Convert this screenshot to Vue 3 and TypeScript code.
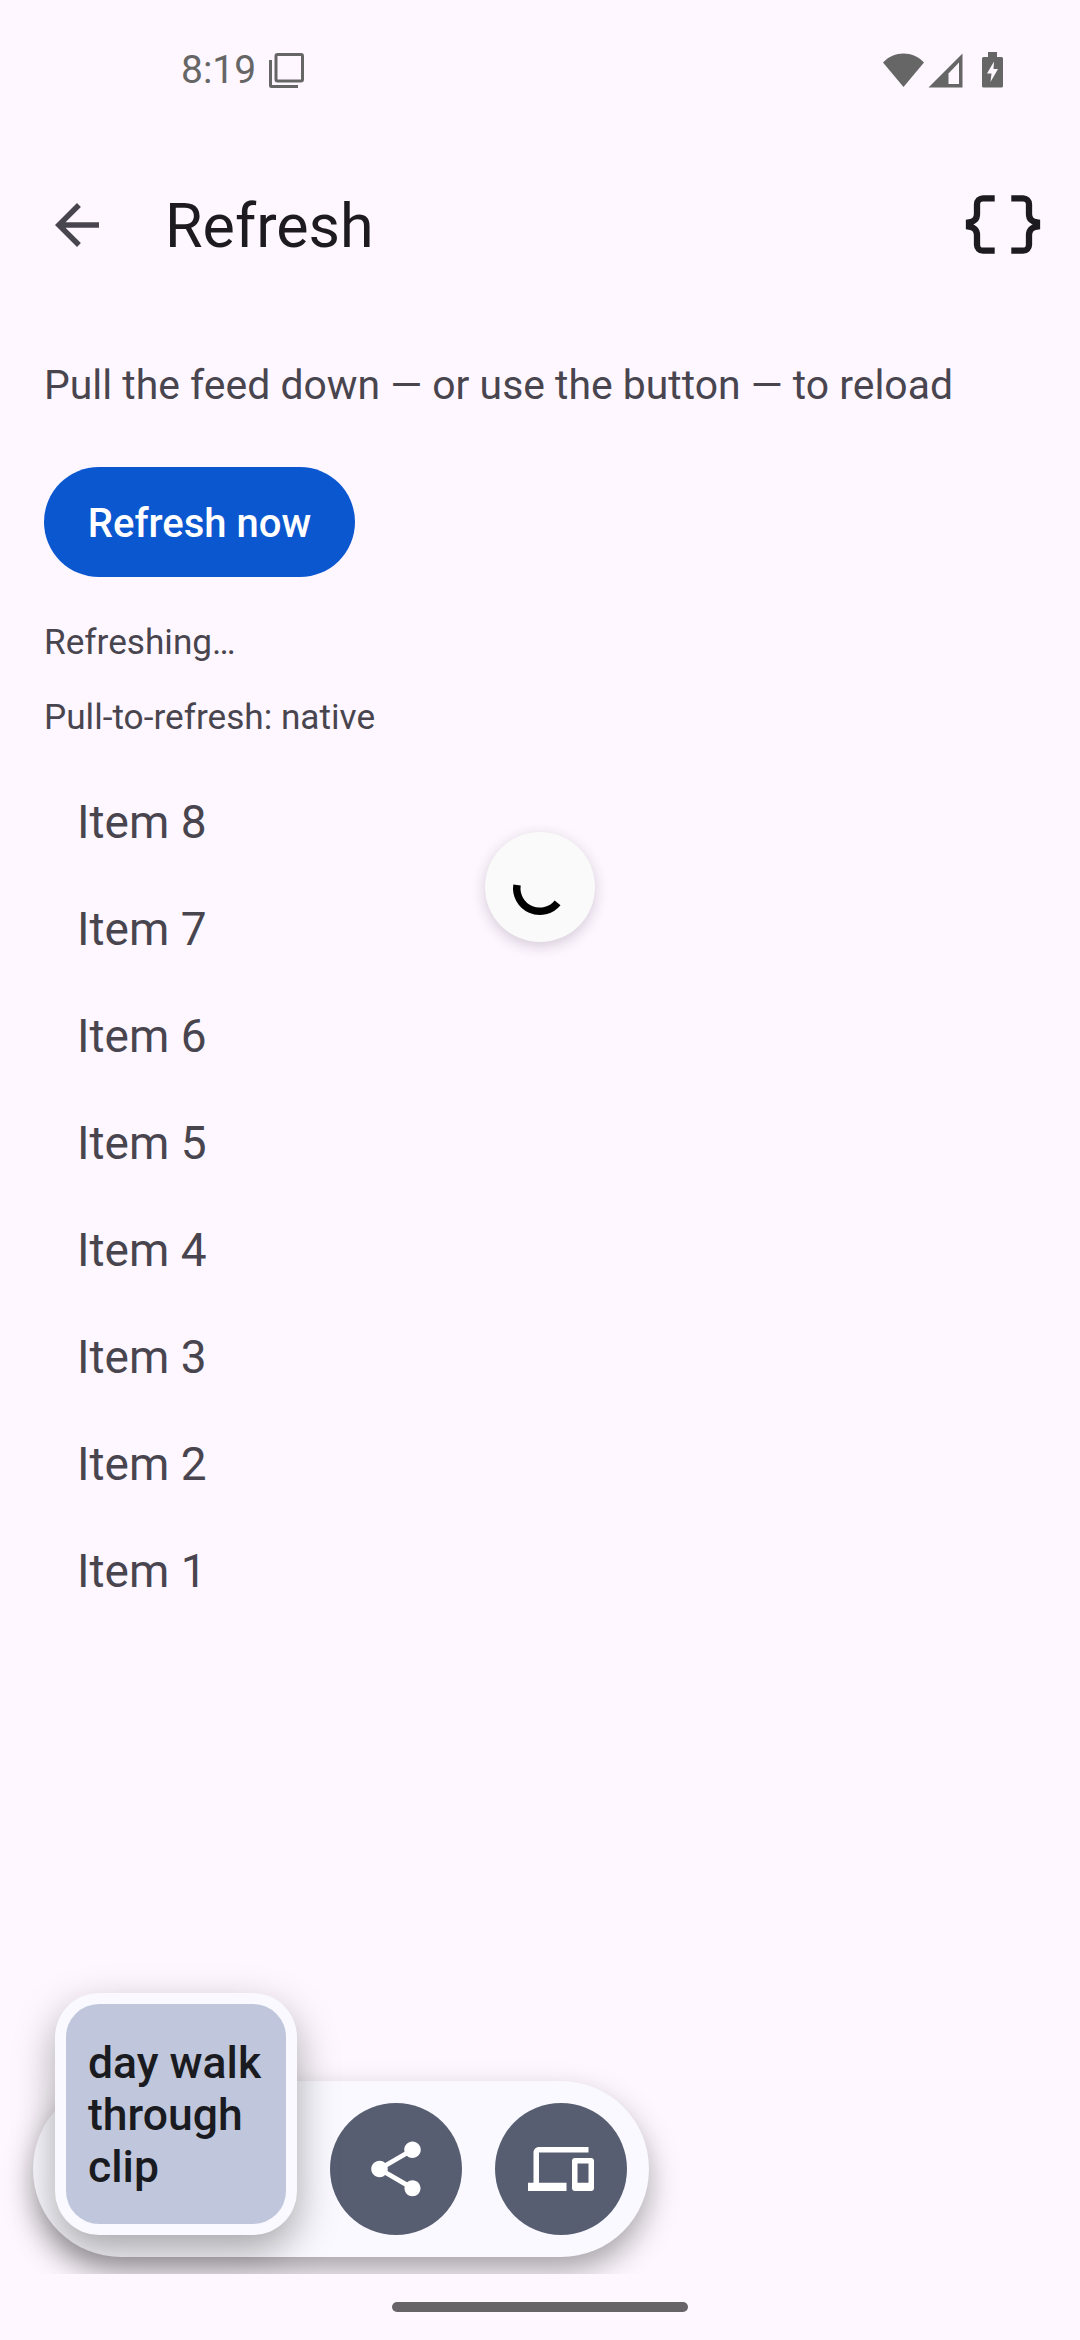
<script setup lang="ts">
import { ref } from 'vue'

const items = ref([8, 7, 6, 5, 4, 3, 2, 1])
const refreshing = ref(true)
</script>

<template>
  <div class="page">
    <!-- status bar -->
    <div class="status">
      <span class="time">8:19</span>
      <svg class="copy" width="35" height="35" viewBox="0 0 35 35">
        <rect x="7" y="1.500" width="26.500" height="26.500" rx="1.500" fill="none" stroke="#666" stroke-width="3" />
        <path d="M1.500 7v25.500a1 1 0 0 0 1 1H29" fill="none" stroke="#666" stroke-width="3" />
      </svg>
      <div class="status-right">
        <svg width="41" height="36" viewBox="0 0 41 36">
          <path d="M0 10.500C11 -1.500 30 -1.500 41 10.500L20.500 35z" fill="#666" />
        </svg>
        <svg class="signal" width="35" height="36" viewBox="0 0 35 36">
          <path d="M34.500 1.500V35.500H0.500z" fill="#666" />
          <path d="M20.500 21.500L31 10.500V32H20.500z" fill="#fef7ff" />
        </svg>
        <svg class="battery" width="21" height="36" viewBox="0 0 21 36">
          <path d="M6 0h9v5h4.500a1.500 1.500 0 0 1 1.500 1.500V34a1.500 1.500 0 0 1-1.500 1.500H1.500A1.500 1.500 0 0 1 0 34V6.500A1.500 1.500 0 0 1 1.500 5H6z" fill="#666" />
          <path d="M12 9.500L5 21.500h4.500L8.500 30l7.500-13h-4.500z" fill="#fef7ff" />
        </svg>
      </div>
    </div>

    <!-- app bar -->
    <header class="appbar">
      <svg class="back" width="66" height="66" viewBox="0 0 24 24">
        <path d="M20 11H7.830l5.590-5.590L12 4l-8 8 8 8 1.410-1.410L7.830 13H20v-2z" fill="#49454f" />
      </svg>
      <h1 class="title">Refresh</h1>
      <svg class="braces" width="88" height="88" viewBox="0 0 88 88">
        <g fill="none" stroke="#1d1b20" stroke-width="6.300">
          <path d="M35.700 17.300H24a6 6 0 0 0-6 6V33c0 5-3 8-8 8.500V45.500c5 .5 8 3.500 8 8.500V63.700a6 6 0 0 0 6 6H35.700" />
          <path d="M35.700 17.300H24a6 6 0 0 0-6 6V33c0 5-3 8-8 8.500V45.500c5 .5 8 3.500 8 8.500V63.700a6 6 0 0 0 6 6H35.700" transform="matrix(-1 0 0 1 88 0)" />
        </g>
      </svg>
    </header>

    <main class="content">
      <p class="desc">Pull the feed down — or use the button — to reload</p>
      <button class="refresh-btn">Refresh now</button>
      <p v-if="refreshing" class="label first">Refreshing…</p>
      <p class="label second">Pull-to-refresh: native</p>
      <ul class="list">
        <li v-for="n in items" :key="n" class="item">Item {{ n }}</li>
      </ul>
    </main>

    <!-- pull to refresh spinner -->
    <div v-if="refreshing" class="spinner">
      <svg width="110" height="110" viewBox="0 0 110 110">
        <path d="M32 53A23 23 0 0 0 72.600 70.800" fill="none" stroke="#000" stroke-width="7.500" />
      </svg>
    </div>

    <!-- floating dock, shadow is cut off at its window edge -->
    <div class="dock-window">
      <div class="dock">
        <div class="clip-card">
          <div class="clip-inner">day walk through clip</div>
        </div>
        <button class="round">
          <svg width="66" height="66" viewBox="0 0 24 24">
            <path d="M18 16.080c-.76 0-1.440.3-1.960.77L8.910 12.700c.05-.23.09-.46.09-.7s-.04-.47-.09-.7l7.050-4.110c.54.5 1.250.81 2.040.81 1.660 0 3-1.340 3-3s-1.340-3-3-3-3 1.340-3 3c0 .24.04.47.09.7L8.040 9.810C7.500 9.310 6.790 9 6 9c-1.660 0-3 1.340-3 3s1.340 3 3 3c.79 0 1.500-.31 2.040-.81l7.120 4.160c-.05.21-.08.43-.08.65 0 1.610 1.310 2.920 2.920 2.920 1.610 0 2.920-1.310 2.920-2.920s-1.310-2.920-2.920-2.920z" fill="#fff" />
          </svg>
        </button>
        <button class="round">
          <svg width="66" height="66" viewBox="0 0 24 24">
            <path d="M4 6h18V4H4c-1.100 0-2 .9-2 2v11H0v3h14v-3H4V6zm19 2h-6c-.55 0-1 .45-1 1v10c0 .55.45 1 1 1h6c.55 0 1-.45 1-1V9c0-.55-.45-1-1-1zm-1 9h-4v-7h4v7z" fill="#fff" />
          </svg>
        </button>
      </div>
    </div>

    <div class="handle"></div>
  </div>
</template>

<style scoped>
.page {
  position: relative;
  width: 1080px;
  height: 2340px;
  overflow: hidden;
  background: #fef7ff;
  font-family: Roboto, "Liberation Sans", sans-serif;
}
.status {
  display: flex;
  align-items: center;
  height: 148px;
  padding: 0 77px 8px 181px;
  box-sizing: border-box;
}
.time {
  font-size: 39px;
  color: #666;
  line-height: 44px;
}
.copy { margin-left: 13px; }
.status-right {
  margin-left: auto;
  display: flex;
  align-items: center;
}
.signal { margin-left: 4px; }
.battery { margin-left: 19px; }
.appbar {
  display: flex;
  align-items: center;
  height: 154px;
  padding: 2px 33px 0 44px;
  box-sizing: border-box;
}
.back { margin-top: -2px; }
.title {
  margin: 0 0 0 55px;
  font-size: 61px;
  font-weight: 400;
  color: #1d1b20;
}
.braces { margin-left: auto; margin-top: -2px; }
.content { padding: 50px 44px 0; }
.desc {
  margin: 0;
  font-size: 40.900px;
  line-height: 67px;
  color: #49454f;
}
.refresh-btn {
  display: block;
  margin-top: 48px;
  width: 311px;
  height: 110px;
  border: none;
  border-radius: 55px;
  background: #0b57d0;
  color: #fff;
  font-family: inherit;
  font-size: 40px;
  font-weight: 500;
  padding: 2px 0 0;
}
.label {
  margin: 0;
  font-size: 35.200px;
  line-height: 44px;
  color: #49454f;
}
.first { margin-top: 43px; }
.second { margin-top: 31px; }
.list {
  list-style: none;
  margin: 28px 0 0;
  padding: 0;
}
.item {
  height: 107px;
  box-sizing: border-box;
  display: flex;
  align-items: center;
  padding: 2px 0 0 33px;
  font-size: 46px;
  color: #49454f;
}
.spinner {
  position: absolute;
  left: 485px;
  top: 832px;
  width: 110px;
  height: 110px;
  border-radius: 50%;
  background: #fafafa;
  box-shadow: 0 4px 14px rgba(60, 40, 70, 0.22);
}
.spinner svg { display: block; }
.dock-window {
  position: absolute;
  left: 0;
  top: 1950px;
  width: 1080px;
  height: 324px;
  overflow: hidden;
}
.dock {
  position: absolute;
  left: 33px;
  top: 131px;
  width: 616px;
  height: 176px;
  box-sizing: border-box;
  padding: 22px 22px 22px 297px;
  display: flex;
  gap: 33px;
  border-radius: 88px;
  background: #f9f9ff;
  box-shadow: 0 14px 30px rgba(0, 0, 0, 0.34);
}
.clip-card {
  position: absolute;
  left: 22px;
  top: -88px;
  width: 242px;
  height: 242px;
  box-sizing: border-box;
  padding: 11px;
  border-radius: 44px;
  background: #f9f9ff;
  box-shadow: 0 16px 40px rgba(0, 0, 0, 0.34);
}
.clip-inner {
  box-sizing: border-box;
  width: 220px;
  height: 220px;
  padding: 33px 22px;
  border-radius: 33px;
  background: #c0c7dc;
  color: #1a1b20;
  font-size: 44.500px;
  font-weight: 500;
  line-height: 52px;
}
.round {
  width: 132px;
  height: 132px;
  border: none;
  border-radius: 50%;
  background: #585e71;
  padding: 33px;
  display: flex;
  align-items: center;
  justify-content: center;
  flex: none;
}
.round svg { flex: none; }
.handle {
  position: absolute;
  left: 392px;
  top: 2302px;
  width: 296px;
  height: 10px;
  border-radius: 5px;
  background: #676467;
}
</style>
